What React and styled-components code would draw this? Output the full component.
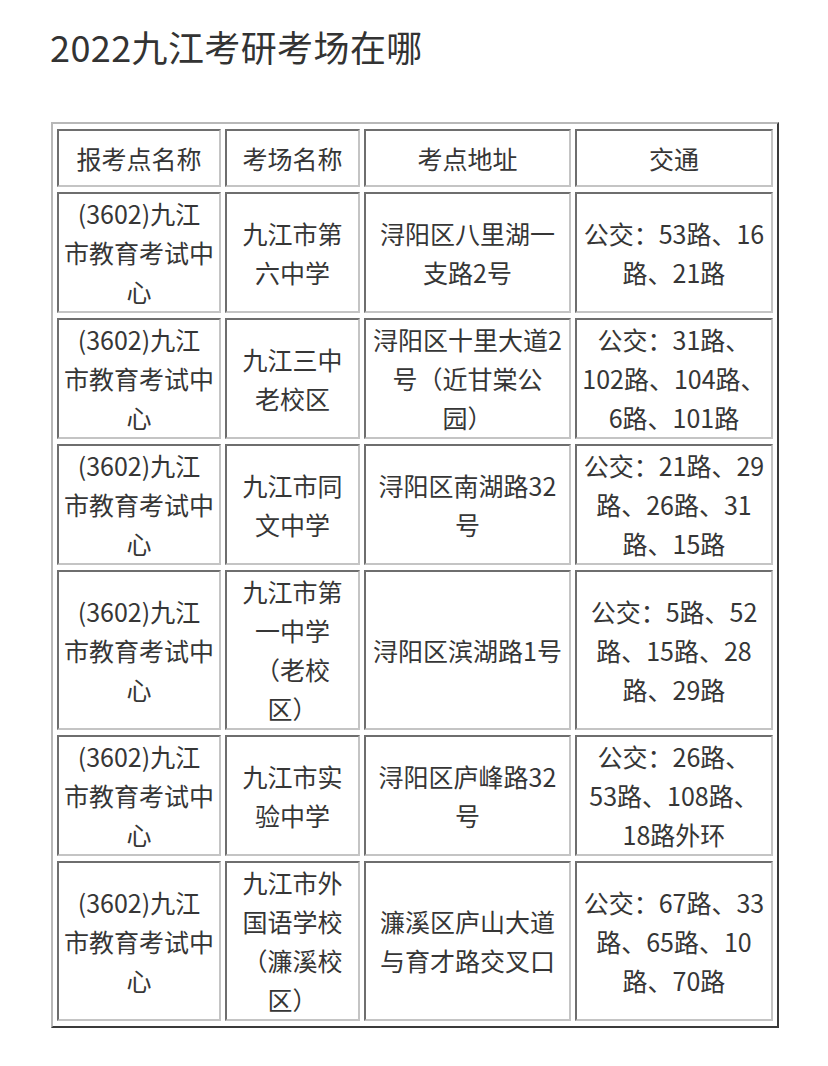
import React from "react";
import styled, { createGlobalStyle } from "styled-components";

const GlobalStyle = createGlobalStyle`
  html, body {
    margin: 0;
    padding: 0;
    background: #ffffff;
  }
  body {
    font-family: "Noto Sans CJK SC", "Noto Sans", sans-serif;
    color: #333333;
  }
`;

const columns = [
  { title: "报考点名称", width: 164 },
  { title: "考场名称", width: 135 },
  { title: "考点地址", width: 207 },
  { title: "交通", width: 198 },
];

const center = ["(3602)九江", "市教育考试中", "心"];

const rows = [
  [center, ["九江市第", "六中学"], ["浔阳区八里湖一", "支路2号"], ["公交：53路、16", "路、21路"]],
  [
    center,
    ["九江三中", "老校区"],
    ["浔阳区十里大道2", "号（近甘棠公", "园）"],
    ["公交：31路、", "102路、104路、", "6路、101路"],
  ],
  [center, ["九江市同", "文中学"], ["浔阳区南湖路32", "号"], ["公交：21路、29", "路、26路、31", "路、15路"]],
  [
    center,
    ["九江市第", "一中学", "（老校", "区）"],
    ["浔阳区滨湖路1号"],
    ["公交：5路、52", "路、15路、28", "路、29路"],
  ],
  [center, ["九江市实", "验中学"], ["浔阳区庐峰路32", "号"], ["公交：26路、", "53路、108路、", "18路外环"]],
  [
    center,
    ["九江市外", "国语学校", "（濂溪校", "区）"],
    ["濂溪区庐山大道", "与育才路交叉口"],
    ["公交：67路、33", "路、65路、10", "路、70路"],
  ],
];

const Page = styled.div`
  width: 828px;
  min-height: 1066px;
  padding: 21px 0 0 50px;
  box-sizing: border-box;
`;

const Title = styled.h1`
  margin: 0 0 51px;
  font-size: 36px;
  font-weight: 400;
  line-height: 50px;
  color: #333333;
  letter-spacing: 0.4px;
`;

const Table = styled.table`
  border-collapse: separate;
  border-spacing: 4px 5px;
  table-layout: fixed;
  margin-left: 1px;
  border-style: solid;
  border-width: 2px;
  border-color: #b8b8b8 #3a3a3a #3a3a3a #b8b8b8;
`;

const Cell = styled.td`
  box-sizing: border-box;
  width: ${(p) => p.$w}px;
  height: ${(p) => (p.$head ? "58px" : "auto")};
  padding: 0 2px;
  border-style: solid;
  border-width: 2px;
  border-color: #6e6e6e #c4c4c4 #c4c4c4 #6e6e6e;
  text-align: center;
  vertical-align: middle;
  font-size: 25px;
  line-height: 39px;
  color: #363636;
`;

const Line = styled.span`
  display: block;
  white-space: nowrap;
`;

export default function App() {
  return (
    <>
      <GlobalStyle />
      <Page>
        <Title>2022九江考研考场在哪</Title>
        <Table>
          <tbody>
            <tr>
              {columns.map((c) => (
                <Cell key={c.title} $w={c.width} $head>
                  {c.title}
                </Cell>
              ))}
            </tr>
            {rows.map((row, i) => (
              <tr key={i}>
                {row.map((lines, j) => (
                  <Cell key={j} $w={columns[j].width}>
                    {lines.map((l, k) => (
                      <Line key={k}>{l}</Line>
                    ))}
                  </Cell>
                ))}
              </tr>
            ))}
          </tbody>
        </Table>
      </Page>
    </>
  );
}
